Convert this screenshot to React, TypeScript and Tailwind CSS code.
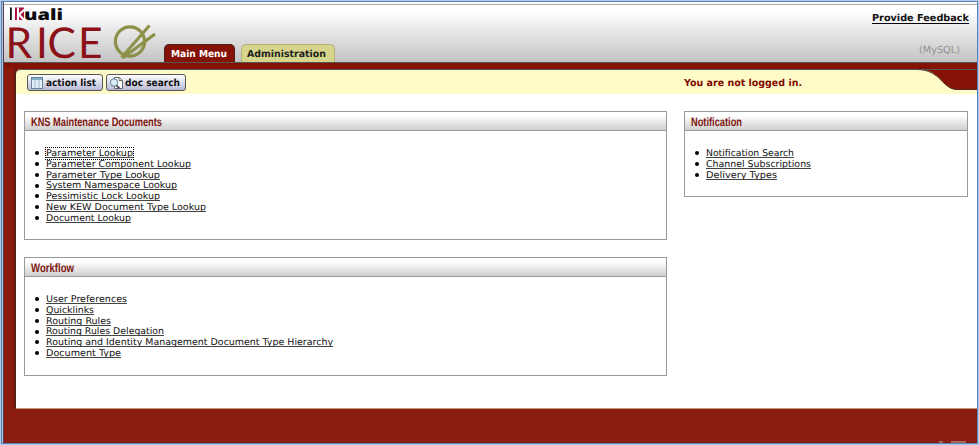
import React from "react";

type PanelProps = { title: string; titleWidth: number; className: string; items: [string, number][]; focusFirst?: boolean };

/** Horizontal text run fitted to a fixed width. */
function Fit({ text, width, size, height, baseline, weight = 400, color = "#1c1c1c", family = "'DejaVu Sans', sans-serif" }: {
  text: string; width: number; size: number; height: number; baseline: number; weight?: number; color?: string; family?: string;
}) {
  return (
    <svg width={width} height={height} className="block overflow-visible" textRendering="geometricPrecision">
      <text x={0} y={baseline} textLength={width} lengthAdjust="spacingAndGlyphs" fontSize={size} fontWeight={weight} fill={color} fontFamily={family}>
        {text}
      </text>
    </svg>
  );
}

function Panel({ title, titleWidth, className, items, focusFirst }: PanelProps) {
  return (
    <section className={`border border-[#999] bg-white ${className}`}>
      <h2 className="flex h-[19px] items-center border-b border-[#999] bg-linear-to-b from-white from-20% to-[#cfcfcf] pl-[6px]">
        <Fit text={title} width={titleWidth} size={12.2} height={14} baseline={11.5} weight={700} color="#7d1710" family="'Liberation Sans Narrow', 'Liberation Sans', sans-serif" />
      </h2>
      <ul className="pt-[17px]">
        {items.map(([label, width], i) => (
          <li key={label} className="flex h-[10.75px] items-center pl-[10px]">
            <span className="mr-[7px] size-[4px] shrink-0 rounded-full bg-black" />
            <a className={`relative block h-[10.75px] ${focusFirst && i === 0 ? "outline-1 outline-dotted outline-black" : ""}`}>
              <Fit text={label} width={width} size={9.3} height={10} baseline={8} color="#111" />
              <span className="absolute inset-x-0 top-[9.2px] h-px bg-[#444]" />
            </a>
          </li>
        ))}
      </ul>
    </section>
  );
}

function Logo() {
  return (
    <svg width="160" height="57" className="block overflow-visible" textRendering="geometricPrecision">
      <rect x="6" y="1.5" width="1.8" height="12.5" fill="#111" />
      <rect x="11" y="1.5" width="9" height="12.5" fill="#a8123e" />
      <path d="M14 1.5V14M20.5 3.5L15 8.5L20.5 14.5" fill="none" stroke="#fff" strokeWidth="2.1" />
      <text x="20" y="13.7" textLength="39" lengthAdjust="spacingAndGlyphs" fontSize="15.5" fontWeight="800" fontFamily="'Open Sans', sans-serif" fill="#0c0c0c">uali</text>
      <text x="1.5 32 43.5 74" y="51.5" fontSize="42.5" fontFamily="Lato, sans-serif" fill="#8b1219">RICE</text>
      <g fill="none" stroke="#8c9048" transform="translate(0 -1.5)">
        <circle cx="126" cy="37" r="14.6" strokeWidth="3.2" />
        <path d="M117.5 53L145.5 21M118.5 53.5L151 29.5" strokeWidth="3" />
      </g>
    </svg>
  );
}

export default function App() {
  return (
    <div className="h-[445px] w-[979px] overflow-hidden border border-[#b3c9e4] bg-[#8b1c0f]">
      <div className="h-full border border-[#5585c0]">
        <div className="flex h-full flex-col border-l border-l-[#a9c2de]">
          <div className="flex h-full flex-col border-l border-[#5c3f48] bg-linear-to-r from-[#8b1c0f] from-[8px] to-[#761408] to-[12px]">
            <header className="flex h-[61px] shrink-0 border-b border-[#555] bg-linear-to-b from-white from-15% to-[#c4c4c4] pt-[2px]">
              <div className="w-[160px] border-t border-[#aaa] pt-px"><Logo /></div>
              <nav className="flex items-end gap-[6px] border-t border-[#aaa]">
                <a className="flex h-[18px] w-[71px] items-center justify-center rounded-t-[5px] border border-b-0 border-[#4c201b] bg-[#841207] pr-px">
                  <Fit text="Main Menu" width={56} size={9.7} height={12} baseline={9.2} weight={700} color="#fff" />
                </a>
                <a className="flex h-[18px] w-[94px] items-center justify-center rounded-t-[5px] border border-b-0 border-[#b4b177] bg-[#d6d58b] pr-[3px]">
                  <Fit text="Administration" width={79} size={9.7} height={12} baseline={9.2} weight={700} color="#222" />
                </a>
              </nav>
              <div className="flex flex-1 flex-col items-end border-t border-[#aaa] pr-[8px] pt-[9px]">
                <div className="border-b border-black">
                  <Fit text="Provide Feedback" width={97} size={9.6} height={9} baseline={7.3} weight={700} color="#111" />
                </div>
                <div className="mr-[9px] mt-[19px]"><Fit text="(MySQL)" width={41} size={9.8} height={13} baseline={9.5} color="#929292" /></div>
              </div>
            </header>
            <div className="h-[6px] shrink-0 bg-[#841207]" />
            <div className="ml-[11px] shrink-0 border-l border-[#3f2a22]">
              <div className="h-[340px] rounded-tl-[5px] border-b border-[#c49a80] bg-white">
                <div className="relative flex h-[25px] overflow-hidden rounded-tl-[5px] border-t border-[#555] bg-[#fffbc9] pl-[11px]">
                  <button className="mt-[4px] flex h-[17px] w-[76px] items-center gap-[3px] rounded-[3px] border border-[#555] bg-linear-to-b from-white to-[#b9bbd6] pl-[3px]">
                    <svg width="12" height="12"><rect x=".5" y=".5" width="11" height="11" fill="#e4eff7" stroke="#668398" /><path d="M1 2h10" stroke="#83afc9" strokeWidth="2" /><path d="M4 3v8M8 3v8" stroke="#9bb8ca" /></svg>
                    <Fit text="action list" width={50} size={9.8} height={14} baseline={9.6} weight={700} color="#111" />
                  </button>
                  <button className="mt-[4px] ml-[3px] flex h-[17px] w-[80px] items-center gap-px rounded-[3px] border border-[#555] bg-linear-to-b from-white to-[#b9bbd6] pl-[2px]">
                    <svg width="15" height="14" fill="none"><path d="M5.5 1.5h5l3 3v8h-8z" fill="#fff" stroke="#666" /><path d="M10 1.5v3h3" stroke="#666" /><circle cx="5" cy="6.5" r="3.7" fill="#d8edf8" stroke="#627b91" /><path d="M7.5 9.5l3 3" stroke="#555" strokeWidth="2" /></svg>
                    <Fit text="doc search" width={55} size={9.8} height={14} baseline={9.6} weight={700} color="#111" />
                  </button>
                  <div className="mt-[7px] ml-auto mr-[175px]"><Fit text="You are not logged in." width={118} size={9.7} height={13} baseline={9} weight={700} color="#7f0a00" /></div>
                  <svg width="60" height="25" className="absolute -top-px right-0 overflow-visible"><path d="M0 0C24 0 25 20 40 20.5H61V0z" fill="#841207" /><path d="M0 .5C24 .5 25 20.5 40 20.5H61" fill="none" stroke="#4a2a22" /></svg>
                </div>
                <main className="flex items-start gap-[17px] pt-[17px] pl-[8px]">
                  <div className="flex flex-col gap-[17px]">
                    <Panel title="KNS Maintenance Documents" titleWidth={131} className="h-[129px] w-[643px]" focusFirst items={[["Parameter Lookup", 87], ["Parameter Component Lookup", 145], ["Parameter Type Lookup", 114], ["System Namespace Lookup", 131], ["Pessimistic Lock Lookup", 114], ["New KEW Document Type Lookup", 160], ["Document Lookup", 85]]} />
                    <Panel title="Workflow" titleWidth={43} className="h-[119px] w-[643px]" items={[["User Preferences", 81], ["Quicklinks", 48], ["Routing Rules", 65], ["Routing Rules Delegation", 118], ["Routing and Identity Management Document Type Hierarchy", 287], ["Document Type", 75]]} />
                  </div>
                  <Panel title="Notification" titleWidth={51} className="h-[86px] w-[284px]" items={[["Notification Search", 88], ["Channel Subscriptions", 105], ["Delivery Types", 71]]} />
                </main>
              </div>
            </div>
            <footer className="flex flex-1 items-end justify-end gap-[8px] bg-[#8b1c0f] pr-[11px]">
              <span className="h-[2px] w-[4px] bg-[#a8655c]" />
              <span className="h-[2px] w-[15px] bg-[#a8655c]" />
            </footer>
          </div>
        </div>
      </div>
    </div>
  );
}
